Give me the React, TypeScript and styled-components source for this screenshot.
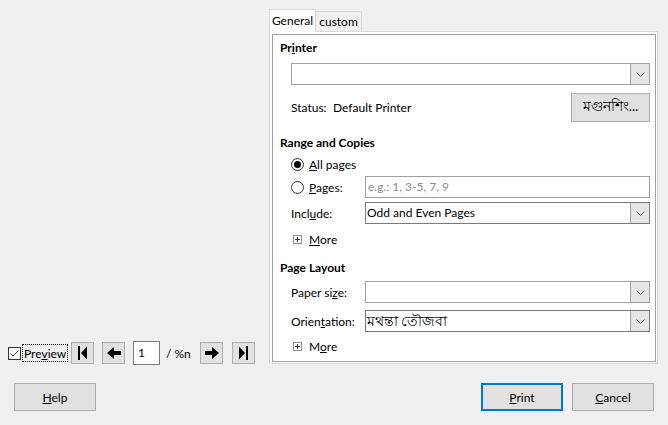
import React from 'react';
import styled, { createGlobalStyle } from 'styled-components';

const GlobalStyle = createGlobalStyle`
  html, body {
    margin: 0;
    padding: 0;
    background: #f0f0f0;
  }
  body {
    font-family: Lato, "Noto Sans", "Segoe UI", sans-serif;
    font-size: 12px;
    color: #000;
  }
`;

const Dialog = styled.div`
  width: 668px;
  height: 425px;
  box-sizing: border-box;
  padding: 9px 10px 0 8px;
  display: flex;
  flex-direction: column;
  background: #f0f0f0;
`;

const Main = styled.div`
  display: grid;
  grid-template-columns: 261px 389px;
  height: 355px;
`;

const PreviewColumn = styled.div`
  display: flex;
  flex-direction: column;
  justify-content: flex-end;
`;

const NavRow = styled.div`
  display: flex;
  align-items: center;
  height: 24px;
  margin-bottom: -1px;
`;

const CheckBox = styled.span`
  width: 13px;
  height: 13px;
  box-sizing: border-box;
  border: 1px solid #333;
  background: #fff;
  display: inline-flex;
  align-items: center;
  justify-content: center;
`;

const FocusLabel = styled.span`
  margin-left: 1px;
  padding: 0 1px;
  width: 46px;
  height: 18px;
  line-height: 17px;
  box-sizing: border-box;
  border: 1px dotted #000;
`;

const NavButton = styled.button<{ $ml: number }>`
  width: 23px;
  height: 22px;
  margin-left: ${p => p.$ml}px;
  padding: 0;
  border: 1px solid #adadad;
  background: #e1e1e1;
  display: inline-flex;
  align-items: center;
  justify-content: center;
`;

const PageInput = styled.div`
  width: 27px;
  height: 24px;
  margin-left: 8px;
  box-sizing: border-box;
  border: 1px solid #7a7a7a;
  background: #fff;
  padding-left: 4px;
  line-height: 22px;
`;

const PageCount = styled.span`
  margin-left: 6px;
  width: 26px;
`;

const TabArea = styled.div`
  display: flex;
  flex-direction: column;
`;

const TabStrip = styled.div`
  display: flex;
  align-items: flex-end;
  height: 22px;
`;

const Tab = styled.div<{ $active?: boolean; $w: number }>`
  position: relative;
  z-index: 1;
  width: ${p => p.$w}px;
  height: ${p => (p.$active ? 23 : 20)}px;
  margin-bottom: ${p => (p.$active ? -1 : 0)}px;
  margin-left: ${p => (p.$active ? 0 : -1)}px;
  box-sizing: border-box;
  border: 1px solid #d9d9d9;
  border-bottom: none;
  background: ${p => (p.$active ? '#fff' : '#f0f0f0')};
  text-align: center;
  line-height: ${p => (p.$active ? 21 : 19)}px;
`;

const TabPage = styled.div`
  height: 333px;
  box-sizing: border-box;
  border: 1px solid #d9d9d9;
  background: #fff;
  padding: 2px 1px 1px 2px;
`;

const Frame = styled.div`
  height: 100%;
  box-sizing: border-box;
  border: 1px solid #a0a0a0;
  padding: 5px 5px 0 7px;
  display: flex;
  flex-direction: column;
`;

const Heading = styled.div<{ $mt?: number }>`
  font-weight: bold;
  height: 16px;
  line-height: 16px;
  margin-top: ${p => p.$mt ?? 0}px;
`;

const Row = styled.div<{ $mt: number; $h?: number }>`
  display: flex;
  align-items: center;
  margin-top: ${p => p.$mt}px;
  margin-left: 11px;
  height: ${p => p.$h ?? 22}px;
`;

const FieldLabel = styled.span`
  width: 74px;
  flex: none;
`;

const Combo = styled.div<{ $dark?: boolean }>`
  flex: 1;
  height: 22px;
  box-sizing: border-box;
  display: flex;
  border: 1px solid ${p => (p.$dark ? '#7a7a7a' : '#a0a0a0')};
  background: #fff;
`;

const ComboValue = styled.div`
  flex: 1;
  padding-left: 1px;
  line-height: 20px;
  white-space: nowrap;
  overflow: hidden;
`;

const ComboArrow = styled.div`
  width: 18px;
  border-left: 1px solid #a0a0a0;
  background: #e5e5e5;
  display: flex;
  align-items: center;
  justify-content: center;
`;

const TextField = styled.div`
  flex: 1;
  height: 22px;
  box-sizing: border-box;
  border: 1px solid #a0a0a0;
  background: #fff;
  padding-left: 2px;
  line-height: 20px;
  color: #8c8c8c;
`;

const StatusText = styled.span`
  width: 42px;
`;

const Spacer = styled.span`
  flex: 1;
`;

const Bengali = styled.span`
  font-size: 13.5px;
`;

const PushButton = styled.button<{ $default?: boolean; $w?: number }>`
  width: ${p => p.$w ?? 82}px;
  height: ${p => (p.$w ? 29 : 28)}px;
  padding: 0;
  box-sizing: border-box;
  font: inherit;
  color: #000;
  background: #e1e1e1;
  border: ${p => (p.$default ? '2px solid #0078d7' : '1px solid #adadad')};
`;

const Radio = styled.span<{ $checked?: boolean }>`
  width: 13px;
  height: 13px;
  box-sizing: border-box;
  border-radius: 50%;
  border: 1px solid #333;
  background: #fff;
  display: inline-flex;
  align-items: center;
  justify-content: center;
  margin-right: 5px;
  flex: none;
  &::after {
    content: '';
    width: 7px;
    height: 7px;
    border-radius: 50%;
    background: ${p => (p.$checked ? '#000' : 'transparent')};
  }
`;

const RadioLabel = styled.span`
  width: 56px;
`;

const ExpandBox = styled.span`
  width: 9px;
  height: 9px;
  box-sizing: border-box;
  border: 1px solid #919191;
  margin: 0 7px 0 2px;
  display: inline-flex;
  align-items: center;
  justify-content: center;
`;

const ButtonBar = styled.div`
  display: flex;
  gap: 9px;
  margin-top: 19px;
  padding: 0 4px 0 6px;
`;

const HelpSlot = styled.div`
  flex: 1;
`;

const Chevron = () => (
  <svg width="9" height="5" viewBox="0 0 9 5">
    <polyline points="0.5,0.5 4.5,4.5 8.5,0.5" fill="none" stroke="#606060" strokeWidth="1" />
  </svg>
);

const Plus = () => (
  <svg width="7" height="7" viewBox="0 0 7 7">
    <path d="M1 3.5H6M3.5 1V6" stroke="#333" strokeWidth="1" />
  </svg>
);

const FirstIcon = () => (
  <svg width="9" height="14" viewBox="0 0 9 14">
    <rect x="0" y="0" width="2" height="14" fill="#000" />
    <polygon points="3,7 9,0.5 9,13.5" fill="#000" />
  </svg>
);

const LastIcon = () => (
  <svg width="9" height="14" viewBox="0 0 9 14">
    <polygon points="0,0.5 6,7 0,13.5" fill="#000" />
    <rect x="7" y="0" width="2" height="14" fill="#000" />
  </svg>
);

const PrevIcon = () => (
  <svg width="14" height="12" viewBox="0 0 14 12">
    <polygon points="0,6 7,0 7,4 14,4 14,8 7,8 7,12" fill="#000" />
  </svg>
);

const NextIcon = () => (
  <svg width="14" height="12" viewBox="0 0 14 12">
    <polygon points="14,6 7,0 7,4 0,4 0,8 7,8 7,12" fill="#000" />
  </svg>
);

const DropDown: React.FC<{ value?: React.ReactNode; dark?: boolean }> = ({ value, dark }) => (
  <Combo $dark={dark}>
    <ComboValue>{value}</ComboValue>
    <ComboArrow>
      <Chevron />
    </ComboArrow>
  </Combo>
);

const More = () => (
  <Row $mt={7} $h={16}>
    <ExpandBox>
      <Plus />
    </ExpandBox>
    <span>
      <u>M</u>ore
    </span>
  </Row>
);

const App: React.FC = () => {
  return (
    <>
      <GlobalStyle />
      <Dialog>
        <Main>
          <PreviewColumn>
            <NavRow>
              <CheckBox>
                <svg width="11" height="11" viewBox="0 0 11 11">
                  <polyline points="1.5,5.5 4,8 9.5,2.5" fill="none" stroke="#333" strokeWidth="1" />
                </svg>
              </CheckBox>
              <FocusLabel>
                Pre<u>v</u>iew
              </FocusLabel>
              <NavButton $ml={3}>
                <FirstIcon />
              </NavButton>
              <NavButton $ml={8}>
                <PrevIcon />
              </NavButton>
              <PageInput>1</PageInput>
              <PageCount>/ %n</PageCount>
              <NavButton $ml={8}>
                <NextIcon />
              </NavButton>
              <NavButton $ml={9}>
                <LastIcon />
              </NavButton>
            </NavRow>
          </PreviewColumn>

          <TabArea>
            <TabStrip>
              <Tab $active $w={47}>General</Tab>
              <Tab $w={47}>custom</Tab>
            </TabStrip>
            <TabPage>
              <Frame>
                <Heading>
                  Pr<u>i</u>nter
                </Heading>
                <Row $mt={7}>
                  <DropDown />
                </Row>
                <Row $mt={8} $h={29}>
                  <StatusText>Status:</StatusText>
                  <span>Default Printer</span>
                  <Spacer />
                  <PushButton $w={79}>
                    <Bengali>মগুনশিং...</Bengali>
                  </PushButton>
                </Row>

                <Heading $mt={13}>Range and Copies</Heading>
                <Row $mt={5} $h={16}>
                  <Radio $checked />
                  <span>
                    <u>A</u>ll pages
                  </span>
                </Row>
                <Row $mt={4}>
                  <Radio />
                  <RadioLabel>
                    <u>P</u>ages:
                  </RadioLabel>
                  <TextField>e.g.: 1, 3-5, 7, 9</TextField>
                </Row>
                <Row $mt={4}>
                  <FieldLabel>
                    Incl<u>u</u>de:
                  </FieldLabel>
                  <DropDown value="Odd and Even Pages" dark />
                </Row>
                <More />

                <Heading $mt={13}>Page Layout</Heading>
                <Row $mt={5}>
                  <FieldLabel>
                    Paper si<u>z</u>e:
                  </FieldLabel>
                  <DropDown />
                </Row>
                <Row $mt={7}>
                  <FieldLabel>
                    Orien<u>t</u>ation:
                  </FieldLabel>
                  <DropDown value={<Bengali>মথন্তা তৌজবা</Bengali>} dark />
                </Row>
                <Row $mt={6} $h={16}>
                  <ExpandBox>
                    <Plus />
                  </ExpandBox>
                  <span>
                    M<u>o</u>re
                  </span>
                </Row>
              </Frame>
            </TabPage>
          </TabArea>
        </Main>

        <ButtonBar>
          <HelpSlot>
            <PushButton>
              <u>H</u>elp
            </PushButton>
          </HelpSlot>
          <PushButton $default>
            <u>P</u>rint
          </PushButton>
          <PushButton>
            <u>C</u>ancel
          </PushButton>
        </ButtonBar>
      </Dialog>
    </>
  );
};

export default App;
